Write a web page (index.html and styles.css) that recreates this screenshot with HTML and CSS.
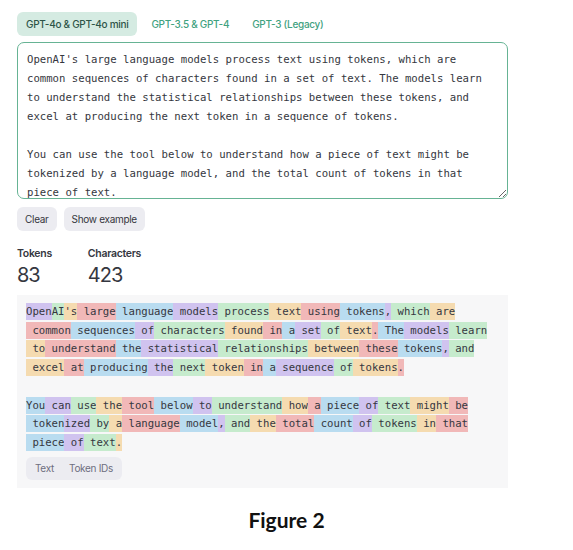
FILE: index.html
```html
<!DOCTYPE html>
<html lang="en">
<head>
  <meta charset="UTF-8">
  <title>Tokenizer</title>
  <link rel="stylesheet" href="styles.css">
</head>
<body>
  <div class="page">
    <div class="tabs">
      <div class="tab active">GPT-4o &amp; GPT-4o mini</div>
      <div class="tab">GPT-3.5 &amp; GPT-4</div>
      <div class="tab">GPT-3 (Legacy)</div>
    </div>

    <textarea class="input" spellcheck="false">OpenAI's large language models process text using tokens, which are common sequences of characters found in a set of text. The models learn to understand the statistical relationships between these tokens, and excel at producing the next token in a sequence of tokens.

You can use the tool below to understand how a piece of text might be tokenized by a language model, and the total count of tokens in that piece of text.</textarea>

    <div class="actions">
      <button class="btn">Clear</button>
      <button class="btn">Show example</button>
    </div>

    <div class="stats">
      <div class="stat">
        <div class="stat-label">Tokens</div>
        <div class="stat-value">83</div>
      </div>
      <div class="stat">
        <div class="stat-label">Characters</div>
        <div class="stat-value">423</div>
      </div>
    </div>

    <div class="output">
      <div class="tokens"><span class="t1">Open</span><span class="t2">AI</span><span class="t3">'s</span><span class="t4"> large</span><span class="t5"> language</span><span class="t1"> models</span><span class="t2"> process</span><span class="t3"> text</span><span class="t4"> using</span><span class="t5"> tokens</span><span class="t1">,</span><span class="t2"> which</span><span class="t3"> are</span>
<span class="t4"> common</span><span class="t5"> sequences</span><span class="t1"> of</span><span class="t2"> characters</span><span class="t3"> found</span><span class="t4"> in</span><span class="t5"> a</span><span class="t1"> set</span><span class="t2"> of</span><span class="t3"> text</span><span class="t4">.</span><span class="t5"> The</span><span class="t1"> models</span><span class="t2"> learn</span>
<span class="t3"> to</span><span class="t4"> understand</span><span class="t5"> the</span><span class="t1"> statistical</span><span class="t2"> relationships</span><span class="t3"> between</span><span class="t4"> these</span><span class="t5"> tokens</span><span class="t1">,</span><span class="t2"> and</span>
<span class="t3"> excel</span><span class="t4"> at</span><span class="t5"> producing</span><span class="t1"> the</span><span class="t2"> next</span><span class="t3"> token</span><span class="t4"> in</span><span class="t5"> a</span><span class="t1"> sequence</span><span class="t2"> of</span><span class="t3"> tokens</span><span class="t4">.</span>

<span class="t5">You</span><span class="t1"> can</span><span class="t2"> use</span><span class="t3"> the</span><span class="t4"> tool</span><span class="t5"> below</span><span class="t1"> to</span><span class="t2"> understand</span><span class="t3"> how</span><span class="t4"> a</span><span class="t5"> piece</span><span class="t1"> of</span><span class="t2"> text</span><span class="t3"> might</span><span class="t4"> be</span>
<span class="t5"> token</span><span class="t1">ized</span><span class="t2"> by</span><span class="t3"> a</span><span class="t4"> language</span><span class="t5"> model</span><span class="t1">,</span><span class="t2"> and</span><span class="t3"> the</span><span class="t4"> total</span><span class="t5"> count</span><span class="t1"> of</span><span class="t2"> tokens</span><span class="t3"> in</span><span class="t4"> that</span>
<span class="t5"> piece</span><span class="t1"> of</span><span class="t2"> text</span><span class="t3">.</span></div>
      <div class="view-toggle">
        <span class="view">Text</span>
        <span class="view">Token IDs</span>
      </div>
    </div>
  </div>

  <h2 class="caption">Figure 2</h2>
</body>
</html>
```

FILE: styles.css
```css
body {
  margin: 0;
  background: #ffffff;
  font-family: 'Inter', 'Liberation Sans', sans-serif;
  color: #353740;
}

.page {
  width: 491px;
  padding: 12px 0 0 17px;
}

.tabs {
  display: flex;
  gap: 5px;
  height: 24px;
}

.tab {
  display: flex;
  align-items: center;
  padding: 0 9px;
  font-size: 10px;
  font-weight: 500;
  letter-spacing: -0.3px;
  color: #3fa27f;
  border-radius: 6px;
}

.tab.active {
  background: #d5ebe2;
  color: #2d5447;
}

.input {
  display: block;
  box-sizing: border-box;
  width: 491px;
  height: 157px;
  margin: 6px 0 0;
  padding: 7px 9px;
  border: 1.5px solid #66b394;
  border-radius: 7px;
  font-family: 'DejaVu Sans Mono', monospace;
  font-size: 10.65px;
  line-height: 19px;
  color: #353740;
  overflow: hidden;
  resize: vertical;
  outline: none;
}

.actions {
  display: flex;
  gap: 7px;
  margin-top: 8px;
}

.btn {
  height: 24px;
  padding: 0 8px;
  border: none;
  border-radius: 6px;
  background: #ececf1;
  color: #353740;
  font-family: 'Inter', 'Liberation Sans', sans-serif;
  font-size: 10px;
  letter-spacing: -0.3px;
}

.stats {
  display: flex;
  gap: 36px;
  margin-top: 16px;
}

.stat-label {
  font-size: 10.5px;
  font-weight: 600;
  letter-spacing: -0.3px;
  line-height: 14px;
}

.stat-value {
  font-size: 20px;
  font-weight: 400;
  letter-spacing: -1px;
  line-height: 28px;
}

.output {
  margin-top: 6px;
  padding: 8px 9px 8px 9px;
  background: #f7f7f8;
}

.tokens {
  font-family: 'DejaVu Sans Mono', monospace;
  font-size: 10.65px;
  line-height: 18.7px;
  white-space: pre;
  color: #353740;
}

.tokens span {
  padding: 2px 0;
}

.t1 { background: #d0c3ef; }
.t2 { background: #c6ebcd; }
.t3 { background: #f5dbb0; }
.t4 { background: #f1b8b8; }
.t5 { background: #b9dcf0; }

.view-toggle {
  display: inline-flex;
  gap: 15px;
  height: 23px;
  align-items: center;
  margin-top: 4px;
  padding: 0 9px;
  border-radius: 6px;
  background: #ececf1;
  font-size: 10px;
  letter-spacing: -0.3px;
  color: #6e6e80;
}

.caption {
  margin: 19px 0 0;
  text-align: center;
  font-family: 'Lato', sans-serif;
  font-size: 21px;
  font-weight: 700;
  color: #111111;
}
```
